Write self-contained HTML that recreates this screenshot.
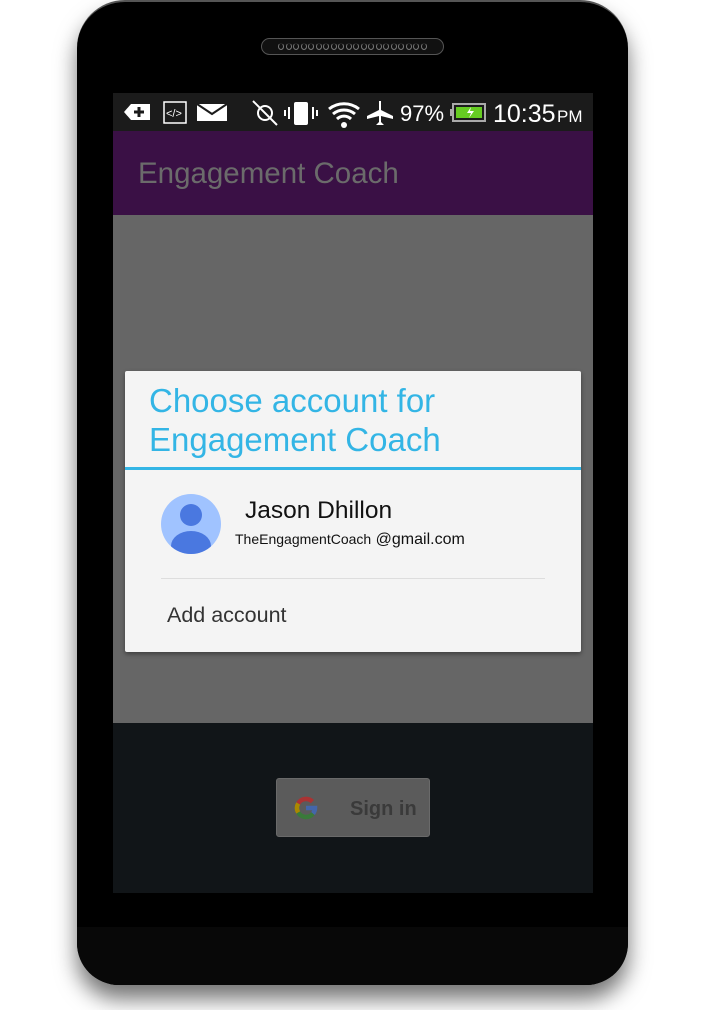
<!DOCTYPE html>
<html><head><meta charset="utf-8"><style>
*{margin:0;padding:0;box-sizing:border-box}
body{width:705px;height:1010px;background:#fff;position:relative;overflow:hidden;font-family:"Liberation Sans",sans-serif}
.phone{position:absolute;left:77px;top:0;width:551px;height:985px;background:#000;border-radius:48px 48px 42px 42px;box-shadow:0 14px 22px rgba(0,0,0,.55);border-top:2px solid #555}
.chin{position:absolute;left:77px;top:927px;width:551px;height:58px;background:#080808;border-radius:0 0 42px 42px}
.speaker{position:absolute;left:261px;top:38px;width:183px;height:17px;border-radius:9px;background:#111;border:1px solid #555;display:flex;align-items:center;justify-content:center;gap:1.5px}
.speaker i{display:block;width:6px;height:7px;border-radius:50%;border:1px solid #777;border-top-color:#222}
.status{position:absolute;left:113px;top:93px;width:480px;height:38px;background:#1b1b1b;color:#fff}
.appbar{position:absolute;left:113px;top:131px;width:480px;height:84px;background:#3a1045;color:#6b6b6b;font-size:29.5px;padding:26px 0 0 25px}
.gray{position:absolute;left:113px;top:215px;width:480px;height:508px;background:#666}
.dark{position:absolute;left:113px;top:723px;width:480px;height:170px;background:#111518}
.btn{position:absolute;left:276px;top:778px;width:154px;height:59px;background:#5b5b5b;border-radius:3px;border:1px solid #6a6a6a}
.btn span{position:absolute;left:73px;top:19px;font-size:20px;font-weight:bold;color:#3a3a3a}
.dialog{position:absolute;left:125px;top:371px;width:456px;height:281px;background:#f4f4f4;border-radius:2px;box-shadow:0 2px 5px rgba(0,0,0,.4)}
.title{position:absolute;left:24px;top:10px;color:#33b5e5;font-size:33px;line-height:39px}
.rule{position:absolute;left:0;top:96px;width:456px;height:3px;background:#33b5e5}
.av{position:absolute;left:36px;top:123px;width:60px;height:60px;border-radius:50%;background:#a0c3ff;overflow:hidden}
.name{position:absolute;left:120px;top:126px;font-size:24.5px;color:#111}
.mail{position:absolute;left:110px;top:160px;font-size:16px;color:#111}
.sep{position:absolute;left:36px;top:207px;width:384px;height:1px;background:#ddd}
.add{position:absolute;left:42px;top:232px;font-size:21.5px;color:#333}
</style></head><body>
<div class="phone"></div>
<div class="chin"></div>
<div class="speaker"><i></i><i></i><i></i><i></i><i></i><i></i><i></i><i></i><i></i><i></i><i></i><i></i><i></i><i></i><i></i><i></i><i></i><i></i><i></i><i></i></div>
<div class="status">
<svg width="480" height="38" style="position:absolute;left:0;top:0">
<path d="M18 11h19v16H18l-7-8z" fill="#fff"/><path d="M26 14v10M21 19h10" stroke="#1b1b1b" stroke-width="3"/>
<rect x="51" y="9" width="22" height="21" fill="none" stroke="#fff" stroke-width="1.5"/><text x="53" y="24" font-size="11" fill="#fff" font-family="Liberation Sans">&lt;/&gt;</text>
<rect x="84" y="11" width="30" height="17" fill="#fff"/><path d="M84 11l15 10 15-10" stroke="#1b1b1b" stroke-width="2" fill="none"/>
<circle cx="152" cy="20" r="7" fill="none" stroke="#fff" stroke-width="2"/><path d="M140 8l24 24" stroke="#fff" stroke-width="2"/>
<rect x="181" y="9" width="14" height="23" rx="2" fill="#fff"/><path d="M176 14v12M200 14v12M172 17v6M204 17v6" stroke="#fff" stroke-width="2"/>
<path d="M216 16a24 24 0 0 1 30 0M220 21a17 17 0 0 1 22 0M224 26a10 10 0 0 1 14 0" stroke="#fff" stroke-width="3" fill="none"/><circle cx="231" cy="32" r="3" fill="#fff"/>
<path d="M266 8v9l-12 6v3l12-3v6l-3 3h8l-3-3v-6l12 3v-3l-12-6V8z" fill="#fff"/>
<text x="287" y="28" font-size="22" fill="#fff" font-family="Liberation Sans">97%</text>
<rect x="340" y="11" width="32" height="17" fill="none" stroke="#aaa" stroke-width="2"/><rect x="343" y="14" width="26" height="11" fill="#6c2"/><rect x="337" y="16" width="3" height="7" fill="#aaa"/><path d="M358 14l-4 6h4l-2 5 5-7h-4z" fill="#fff"/>
<text x="380" y="29" font-size="25" fill="#fff" font-family="Liberation Sans">10:35</text>
<text x="444" y="29" font-size="17" fill="#fff" font-family="Liberation Sans">PM</text>
</svg></div>
<div class="appbar">Engagement Coach</div>
<div class="gray"></div>
<div class="dark"></div>
<div class="btn">
<svg width="30" height="30" style="position:absolute;left:14px;top:14px" viewBox="0 0 30 30" fill="none" stroke-width="4.5">
<path d="M21.4 8.6A9 9 0 0 0 7.2 10.5" stroke="#a33"/>
<path d="M7.2 10.5A9 9 0 0 0 7.2 19.5" stroke="#a80"/>
<path d="M7.2 19.5A9 9 0 0 0 22 20.6" stroke="#3a7a3a"/>
<path d="M22 20.6A9 9 0 0 0 24 15H15" stroke="#4466aa"/>
</svg><span>Sign in</span></div>
<div class="dialog">
<div class="title">Choose account for<br>Engagement Coach</div>
<div class="rule"></div>
<div class="av"><div style="position:absolute;left:19px;top:10px;width:22px;height:22px;border-radius:50%;background:#4a78e0"></div><div style="position:absolute;left:10px;top:37px;width:40px;height:30px;border-radius:50%;background:#4a78e0"></div></div>
<div class="name">Jason Dhillon</div>
<div class="mail"><span style="font-size:14px">TheEngagmentCoach</span> @gmail.com</div>
<div class="sep"></div>
<div class="add">Add account</div>
</div>
</body></html>
